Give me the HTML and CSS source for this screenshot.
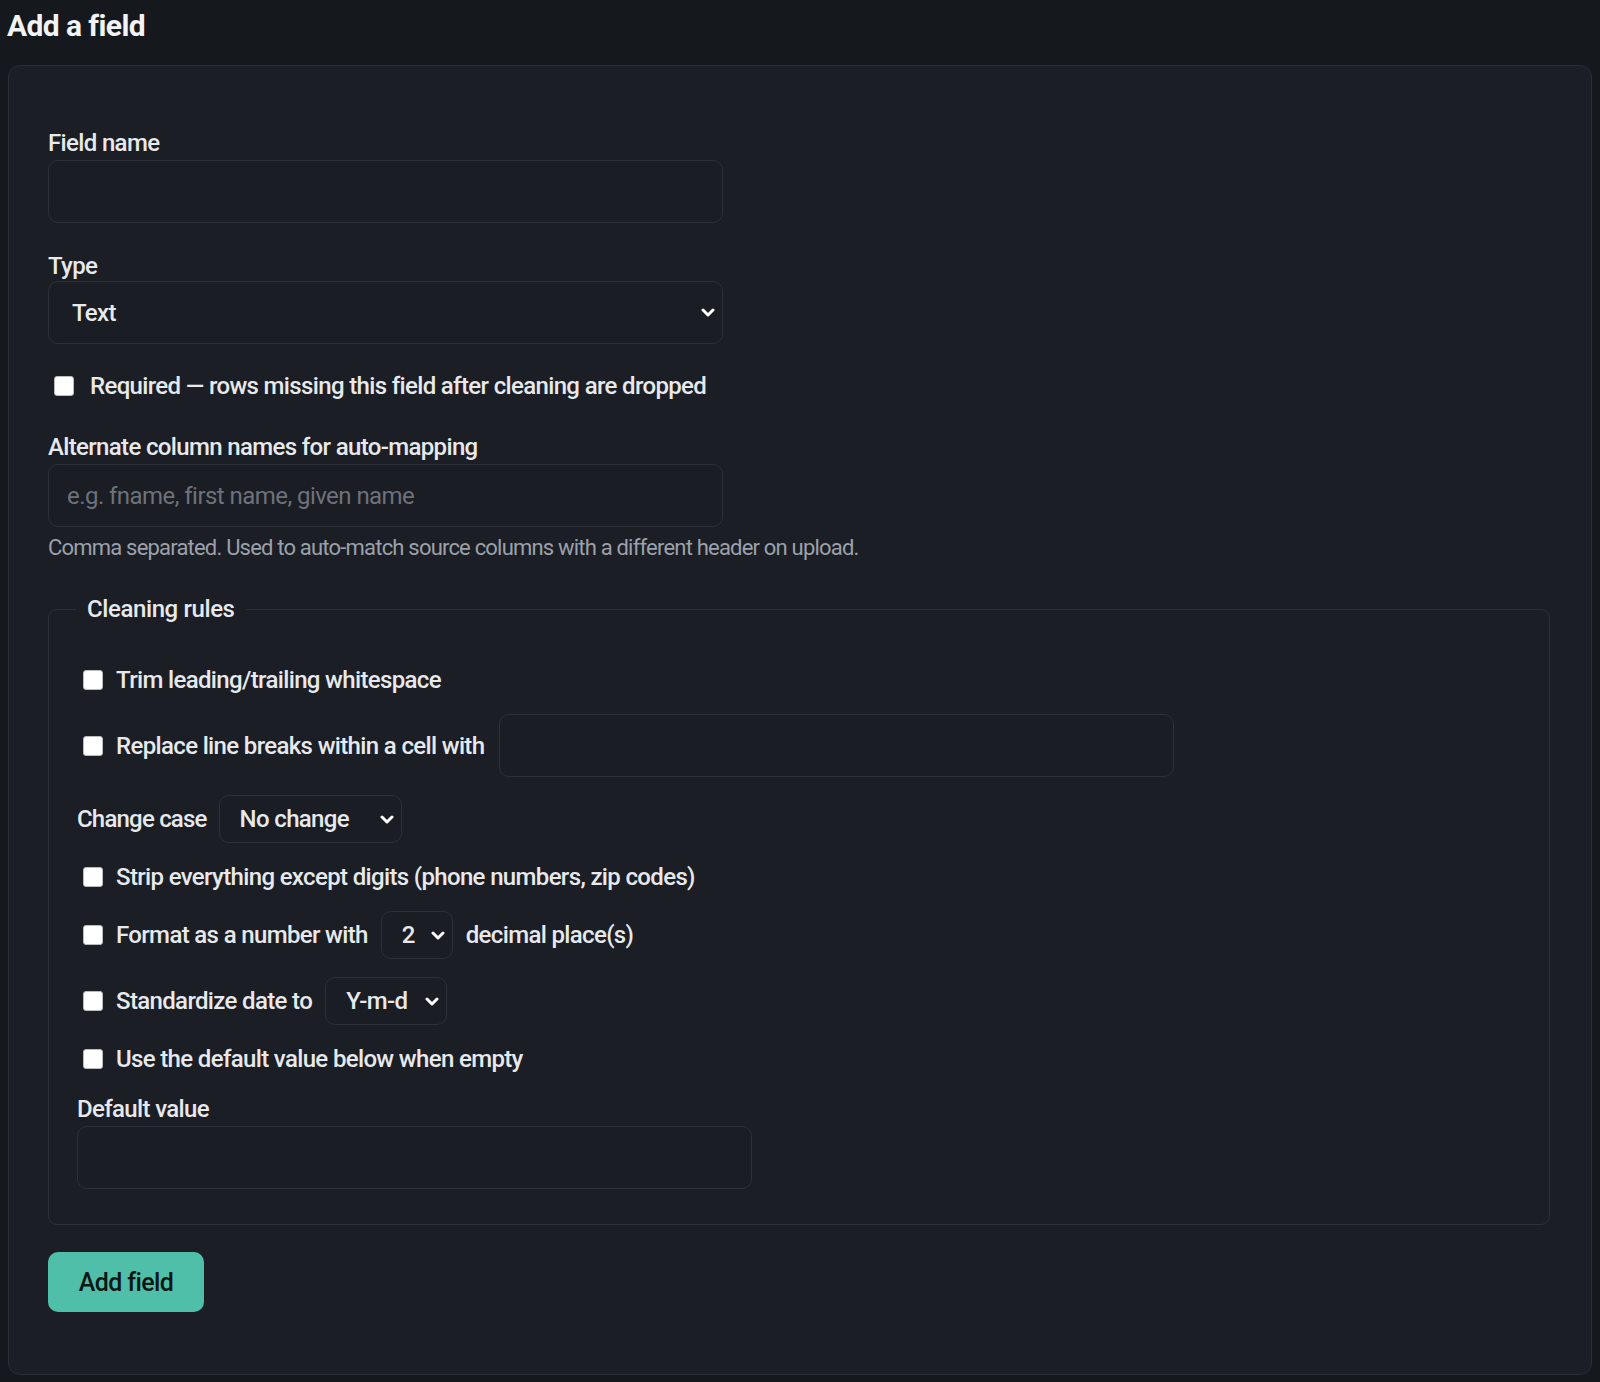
FILE: index.html
```html
<!DOCTYPE html>
<html lang="en">
<head>
<meta charset="utf-8">
<title>Add a field</title>
<link rel="stylesheet" href="styles.css">
</head>
<body>
<h2 class="page-title">Add a field</h2>
<div class="card">
  <form class="field-form">
    <div class="group">
      <label class="label" for="f-name">Field name</label>
      <input class="input" id="f-name" type="text">
    </div>
    <div class="group type-group">
      <label class="label" for="f-type">Type</label>
      <select class="select select-wide" id="f-type"><option>Text</option></select>
    </div>
    <label class="check-row required-row"><input type="checkbox" class="check"><span>Required — rows missing this field after cleaning are dropped</span></label>
    <div class="group alt-group">
      <label class="label" for="f-alt">Alternate column names for auto-mapping</label>
      <input class="input" id="f-alt" type="text" placeholder="e.g. fname, first name, given name">
      <p class="help">Comma separated. Used to auto-match source columns with a different header on upload.</p>
    </div>
    <fieldset class="rules">
      <legend class="rules-legend">Cleaning rules</legend>
      <label class="rule-row"><input type="checkbox" class="check"><span>Trim leading/trailing whitespace</span></label>
      <div class="rule-row replace-row">
        <label class="inline-check"><input type="checkbox" class="check"><span>Replace line breaks within a cell with</span></label>
        <input class="input" type="text">
      </div>
      <div class="rule-row case-row">
        <label for="f-case">Change case</label>
        <select class="select sel-case" id="f-case"><option>No change</option></select>
      </div>
      <label class="rule-row"><input type="checkbox" class="check"><span>Strip everything except digits (phone numbers, zip codes)</span></label>
      <div class="rule-row">
        <label class="inline-check"><input type="checkbox" class="check"><span>Format as a number with</span></label>
        <select class="select sel-dec"><option>2</option></select>
        <span>decimal place(s)</span>
      </div>
      <div class="rule-row">
        <label class="inline-check"><input type="checkbox" class="check"><span>Standardize date to</span></label>
        <select class="select sel-date"><option>Y-m-d</option></select>
      </div>
      <label class="rule-row"><input type="checkbox" class="check"><span>Use the default value below when empty</span></label>
      <div class="group default-group">
        <label class="label" for="f-default">Default value</label>
        <input class="input" id="f-default" type="text">
      </div>
    </fieldset>
    <button class="btn" type="button">Add field</button>
  </form>
</div>
</body>
</html>
```
FILE: styles.css
```css
* { box-sizing: border-box; }

html, body {
  background: #15181d;
}

body {
  margin: 0;
  padding: 0 8px;
  font-family: Roboto, "Liberation Sans", sans-serif;
  color: #e7e9ec;
  font-size: 24px;
  letter-spacing: -0.65px;
}

.page-title {
  margin: 6px 0 19px -1px;
  font-size: 30px;
  line-height: 40px;
  font-weight: 700;
  color: #f1f3f5;
  letter-spacing: -0.6px;
}

.card {
  background: #1b1e25;
  border: 1px solid #2a2e36;
  border-radius: 12px;
  padding: 61px 41px 62px 39px;
}

.field-form {
  display: flex;
  flex-direction: column;
  align-items: flex-start;
}

.group {
  display: flex;
  flex-direction: column;
  align-items: flex-start;
  margin-bottom: 25px;
}

.type-group {
  margin-bottom: 0;
}

.label {
  display: block;
  font-weight: 500;
  line-height: 32px;
  margin-bottom: 1px;
}

.type-group .label {
  margin-top: 2px;
  margin-bottom: -1px;
}

.input,
.select {
  font-family: inherit;
  letter-spacing: -0.65px;
  color: #e7e9ec;
  background-color: #1a1d23;
  border: 1px solid #2c3039;
  border-radius: 10px;
  outline: none;
}

.input {
  width: 675px;
  height: 63px;
  padding: 0 18px;
  font-size: 24px;
}

.input::placeholder {
  color: #6d727b;
  opacity: 1;
  letter-spacing: -0.55px;
}

.select {
  appearance: none;
  -webkit-appearance: none;
  font-size: 24px;
  font-weight: 500;
  padding: 0 30px 0 20px;
  background-image: url("data:image/svg+xml,%3Csvg xmlns='http://www.w3.org/2000/svg' width='14' height='9' viewBox='0 0 14 9'%3E%3Cpath d='M2 2l5 5 5-5' fill='none' stroke='white' stroke-width='3' stroke-linecap='round' stroke-linejoin='round'/%3E%3C/svg%3E");
  background-repeat: no-repeat;
  background-position: right 7px center;
  background-size: 14px 9px;
  height: 48px;
}

.select-wide {
  width: 675px;
  height: 63px;
  padding-left: 23px;
}

.sel-case { width: 183px; }
.sel-dec { width: 72px; }
.sel-date { width: 122px; }

.check {
  appearance: none;
  -webkit-appearance: none;
  width: 20px;
  height: 20px;
  margin: 0 13px 0 6px;
  background: #ffffff;
  border: 1px solid #b8bcc2;
  border-radius: 3px;
  flex: none;
}

.check-row {
  display: flex;
  align-items: center;
  font-weight: 500;
  line-height: 32px;
}

.required-row {
  margin: 26px 0 0;
}

.required-row .check {
  margin-right: 16px;
}

.alt-group {
  margin: 29px 0 0;
}

.help {
  margin: 7px 0 0;
  font-size: 22px;
  line-height: 28px;
  color: #9ba1aa;
  font-weight: 400;
  letter-spacing: -0.8px;
}

.rules {
  align-self: stretch;
  margin: 31px 0 0;
  padding: 39px 28px 35px;
  border: 1px solid #2c3039;
  border-radius: 9px;
  min-width: 0;
}

.rules-legend {
  font-weight: 500;
  line-height: 32px;
  padding: 0 11px 0 11px;
  margin-left: -1px;
  letter-spacing: -0.4px;
}

.rule-row {
  display: flex;
  align-items: center;
  gap: 13px;
  font-weight: 500;
  line-height: 32px;
  margin-bottom: 18px;
}

label.rule-row {
  gap: 0;
}

.replace-row {
  gap: 15px;
}

.inline-check {
  display: flex;
  align-items: center;
}

.case-row {
  gap: 12px;
  letter-spacing: -0.8px;
}

.default-group {
  margin-bottom: 0;
}

.btn {
  margin-top: 27px;
  height: 60px;
  width: 156px;
  padding: 0;
  background: #4fbfaa;
  color: #0e1714;
  border: none;
  border-radius: 10px;
  font-family: inherit;
  letter-spacing: -0.6px;
  font-size: 25px;
  font-weight: 500;
}
```
